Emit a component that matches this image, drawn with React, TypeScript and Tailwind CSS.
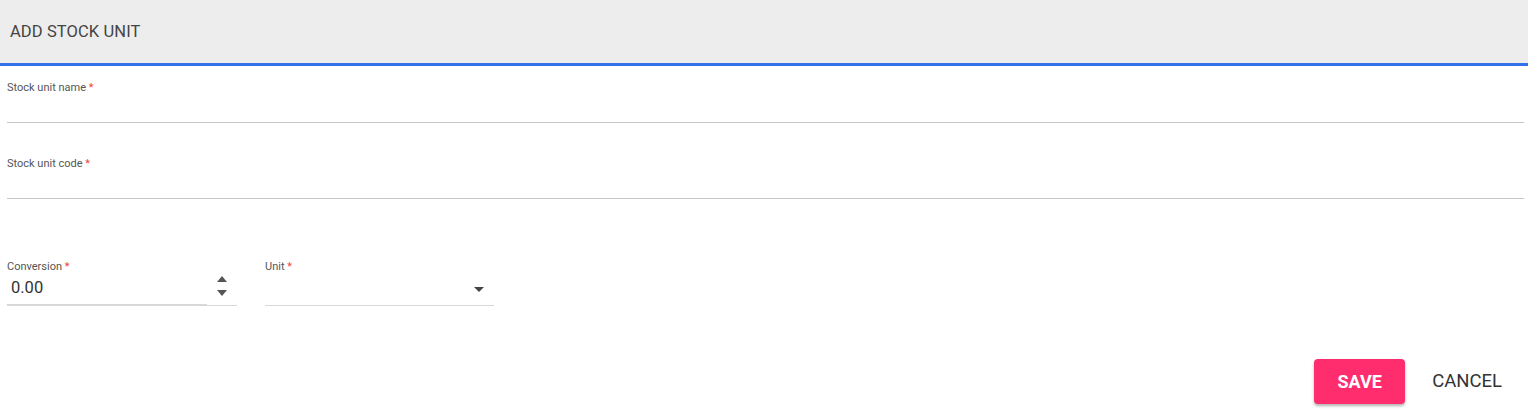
import React from "react";

function Label({ text }: { text: string }) {
  return (
    <div className="text-[11px] leading-[13px] text-[#555]">
      {text} <span className="text-[#f44336]">*</span>
    </div>
  );
}

export default function App() {
  return (
    <div className="w-[1528px] h-[415px] bg-white overflow-hidden" style={{ fontFamily: "Roboto, 'Liberation Sans', sans-serif" }}>
      <div className="h-[66px] bg-[#ededed] border-b-[3px] border-[#3070ea] flex items-center pl-[10px]">
        <span className="text-[16.5px] text-[#444] tracking-[0.1px] mt-[1px]">ADD STOCK UNIT</span>
      </div>
      <div className="pl-[7px] pr-[4px]">
        <div className="pt-[15px]">
          <Label text="Stock unit name" />
          <div className="h-[29px] border-b border-[#c6c6c6]" />
        </div>
        <div className="pt-[34px]">
          <Label text="Stock unit code" />
          <div className="h-[29px] border-b border-[#c6c6c6]" />
        </div>
        <div className="pt-[61px] flex gap-[28px]">
          <div className="w-[230px]">
            <Label text="Conversion" />
            <div className="flex items-end">
              <div className="w-[200px] h-[33px] border-b-2 border-[#d8d8d8] text-[16.5px] text-[#333] pl-[4px] leading-[20px] pt-[5px]">0.00</div>
              <div className="w-[30px] h-[33px] border-b border-[#d8d8d8] flex flex-col items-center justify-start gap-[8px] pt-[3px]">
                <svg width="10" height="6" viewBox="0 0 10 6"><path d="M0 6 L5 0 L10 6 Z" fill="#555" /></svg>
                <svg width="10" height="6" viewBox="0 0 10 6"><path d="M0 0 L5 6 L10 0 Z" fill="#555" /></svg>
              </div>
            </div>
          </div>
          <div className="w-[229px]">
            <Label text="Unit" />
            <div className="h-[33px] border-b border-[#d8d8d8] flex items-start justify-end pr-[10px] pt-[14px]">
              <svg width="10" height="5" viewBox="0 0 10 5"><path d="M0 0 L5 5 L10 0 Z" fill="#444" /></svg>
            </div>
          </div>
        </div>
        <div className="flex justify-end items-center pt-[53px] pr-[22px] gap-[27px]">
          <button className="w-[91px] h-[45px] rounded-[4px] bg-[#ff2c6e] text-white text-[18px] font-bold shadow-[0_2px_3px_rgba(0,0,0,0.3)]">SAVE</button>
          <button className="text-[18.5px] text-[#333]">CANCEL</button>
        </div>
      </div>
    </div>
  );
}
